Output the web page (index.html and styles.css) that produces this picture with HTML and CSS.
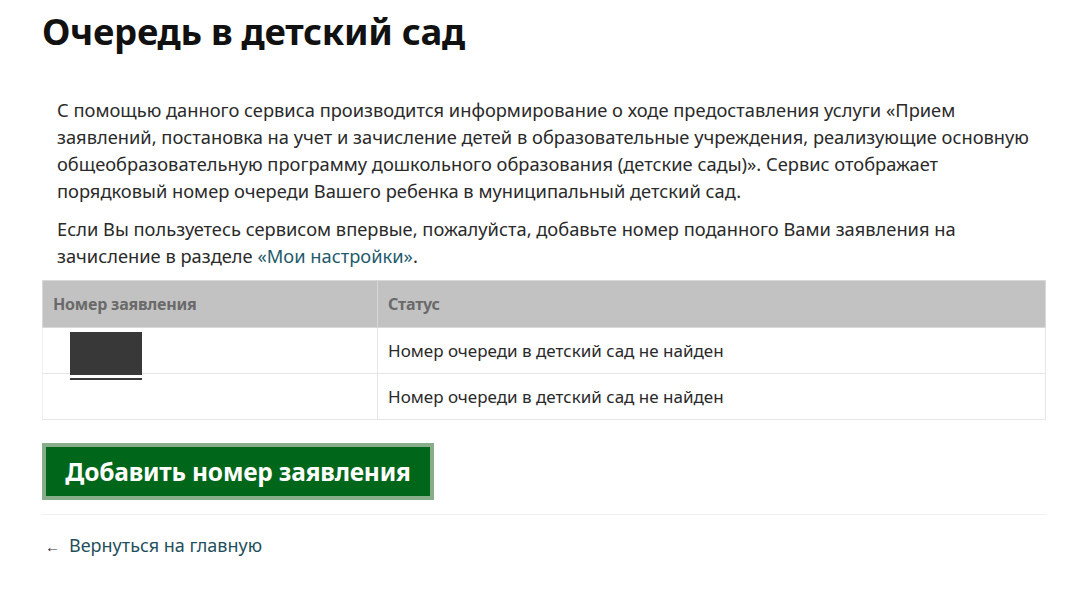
FILE: index.html
```html
<!DOCTYPE html>
<html lang="ru">
<head>
<meta charset="utf-8">
<title>Очередь в детский сад</title>
<link rel="stylesheet" href="styles.css">
</head>
<body>
<main class="page">
  <h1 class="title">Очередь в детский сад</h1>
  <div class="intro">
    <p>С помощью данного сервиса производится информирование о ходе предоставления услуги «Прием заявлений, постановка на учет и зачисление детей в образовательные учреждения, реализующие основную общеобразовательную программу дошкольного образования (детские сады)». Сервис отображает порядковый номер очереди Вашего ребенка в муниципальный детский сад.</p>
    <p>Если Вы пользуетесь сервисом впервые, пожалуйста, добавьте номер поданного Вами заявления на зачисление в разделе <a href="#" class="link">«Мои настройки»</a>.</p>
  </div>
  <table class="queue">
    <thead>
      <tr><th class="col-num">Номер заявления</th><th>Статус</th></tr>
    </thead>
    <tbody>
      <tr><td class="num"><span class="redact"></span></td><td>Номер очереди в детский сад не найден</td></tr>
      <tr><td class="num"></td><td>Номер очереди в детский сад не найден</td></tr>
    </tbody>
  </table>
  <div class="actions">
    <button class="btn">Добавить номер заявления</button>
  </div>
  <hr class="sep">
  <a href="#" class="back"><span class="arrow">←</span>Вернуться на главную</a>
</main>
</body>
</html>
```
FILE: styles.css
```css
html, body { margin: 0; padding: 0; background: #fff; }
body { font-family: "Noto Sans", "Open Sans", sans-serif; color: #222; }
.page { padding: 0 34px 0 42px; }
.title { margin: 0; padding-top: 6px; font-size: 36.5px; line-height: 50px; font-weight: 700; color: #111; letter-spacing: -0.3px; }
.intro { padding: 40px 12px 0 15px; font-size: 18.3px; line-height: 27px; color: #2a2a2a; }
.intro p { margin: 0 0 11px; }
.link { color: #1f5b6b; text-decoration: none; }
.queue { width: 1004px; border-collapse: collapse; margin-top: 4px; font-size: 17px; }
.queue th { background: #c2c2c2; color: #6a6a6a; text-align: left; font-weight: 700; font-size: 16px; letter-spacing: -0.2px; height: 46px; padding: 0 10px; border: 1px solid #d8d8d8; }
.queue th.col-num { width: 314px; }
.queue td { height: 45px; padding: 0 10px; border: 1px solid #e6e6e6; color: #2a2a2a; }
.queue td.num { position: relative; border-left-color: #f0f0f0; }
.redact { position: absolute; left: 27px; top: 4px; width: 72px; height: 43px; background: #383838; }
.redact::after { content: ""; position: absolute; left: 0; right: 0; bottom: -5px; height: 2px; background: #3a3a3a; }
.actions { margin-top: 23px; }
.btn { font-family: inherit; font-size: 24.5px; font-weight: 700; color: #fff; background: #006619; border: 4px solid #87ad8a; height: 57px; width: 392px; padding: 0; margin: 0; cursor: pointer; letter-spacing: -0.2px; }
.sep { border: 0; border-top: 1px solid #f0f0f0; margin: 14px 0 0; width: 1004px; }
.back { display: inline-block; margin-top: 18px; margin-left: 3px; font-size: 18px; color: #1f4f5c; text-decoration: none; }
.arrow { font-size: 15px; color: #333; margin-right: 9px; }
```
